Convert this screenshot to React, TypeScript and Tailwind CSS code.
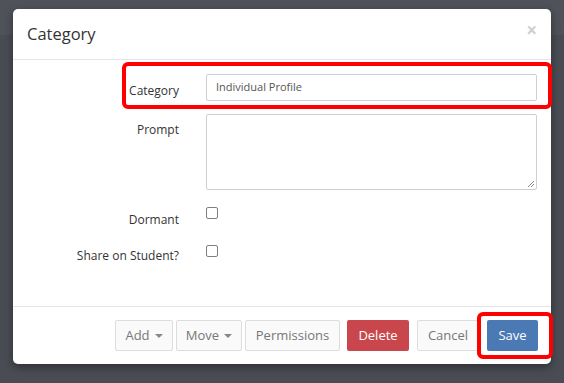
import React from "react";

const Caret = () => (
  <span className="ml-[5px] inline-block w-0 h-0 border-l-[4px] border-r-[4px] border-t-[4px] border-l-transparent border-r-transparent border-t-[#888] align-middle" />
);

export default function App() {
  return (
    <div
      className="w-[564px] h-[383px] overflow-hidden pt-[9px] pl-[13px] bg-[linear-gradient(to_bottom,#50525a_0px,#50525a_35px,#4a4c54_35px,#4a4c54_100%)]"
      style={{ fontFamily: '"Open Sans", sans-serif' }}
    >
      <div className="w-[538px] h-[355px] bg-white rounded-[5px] shadow-[0_3px_9px_rgba(0,0,0,0.4)] flex flex-col">
        {/* header */}
        <div className="h-[51px] border-b border-[#e5e5e5] flex items-center justify-between pl-[14px] pr-[14px] shrink-0">
          <div className="text-[16.5px] text-[#333] leading-none">Category</div>
          <div className="text-[19px] font-bold text-[#cfcfcf] leading-none -mt-[7px]">×</div>
        </div>
        {/* body */}
        <div className="flex-1 flex flex-col pt-[14px] pr-[14px]">
          <div className="relative flex h-[27px]">
            <div className="w-[166px] text-right text-[12px] text-[#333] leading-[18px] pt-[8px]">Category</div>
            <div className="ml-[27px] flex-1 border border-[#ccd0d6] rounded-[2px] flex items-center pl-[9px] text-[11px] text-[#555]">
              Individual Profile
            </div>
            <div className="absolute left-[109px] right-[-15px] top-[-12px] bottom-[-8px] border-[4px] border-[#ff0000] rounded-[6px] pointer-events-none" />
          </div>
          <div className="flex h-[76px] mt-[13px]">
            <div className="w-[166px] text-right text-[12px] text-[#333] leading-[18px] pt-[7px]">Prompt</div>
            <div className="ml-[27px] flex-1 border border-[#ccd0d6] rounded-[2px] relative">
              <svg className="absolute right-[1px] bottom-[1px]" width="8" height="8" viewBox="0 0 8 8">
                <path d="M7 1 L1 7 M7 4 L4 7" stroke="#888" strokeWidth="1" />
              </svg>
            </div>
          </div>
          <div className="flex h-[34px] mt-[14px]">
            <div className="w-[166px] text-right text-[12px] text-[#333] leading-[18px] pt-[7px]">Dormant</div>
            <div className="ml-[27px] pt-[3px]">
              <div className="w-[12px] h-[12px] border border-[#808080] rounded-[2px] bg-white" />
            </div>
          </div>
          <div className="flex h-[34px] mt-[4px]">
            <div className="w-[166px] text-right text-[12px] text-[#333] leading-[18px] pt-[5px]">Share on Student?</div>
            <div className="ml-[27px] pt-[3px]">
              <div className="w-[12px] h-[12px] border border-[#808080] rounded-[2px] bg-white" />
            </div>
          </div>
        </div>
        {/* footer */}
        <div className="h-[58px] border-t border-[#e5e5e5] shrink-0 flex items-center justify-end pr-[13px] text-[13px]">
          <div className="flex gap-[3px]">
            <div className="w-[58px] h-[31px] border border-[#ddd] bg-[#fafafa] rounded-[2px] text-[#777] flex items-center justify-center">
              Add<Caret />
            </div>
            <div className="w-[66px] h-[31px] border border-[#ddd] bg-[#fafafa] rounded-[2px] text-[#777] flex items-center justify-center">
              Move<Caret />
            </div>
            <div className="w-[95px] h-[31px] border border-[#ddd] bg-[#fafafa] rounded-[2px] text-[#777] flex items-center justify-center">
              Permissions
            </div>
          </div>
          <div className="ml-[7px] w-[62px] h-[31px] bg-[#c9474c] rounded-[2px] text-white flex items-center justify-center">
            Delete
          </div>
          <div className="ml-[8px] w-[62px] h-[31px] border border-[#ddd] bg-[#fafafa] rounded-[2px] text-[#777] flex items-center justify-center">
            Cancel
          </div>
          <div className="relative ml-[8px] w-[51px] h-[31px] bg-[#4a79b3] rounded-[2px] text-white flex items-center justify-center">
            Save
            <div className="absolute left-[-10px] right-[-15px] top-[-8px] bottom-[-8px] border-[4px] border-[#ff0000] rounded-[6px] pointer-events-none" />
          </div>
        </div>
      </div>
    </div>
  );
}
